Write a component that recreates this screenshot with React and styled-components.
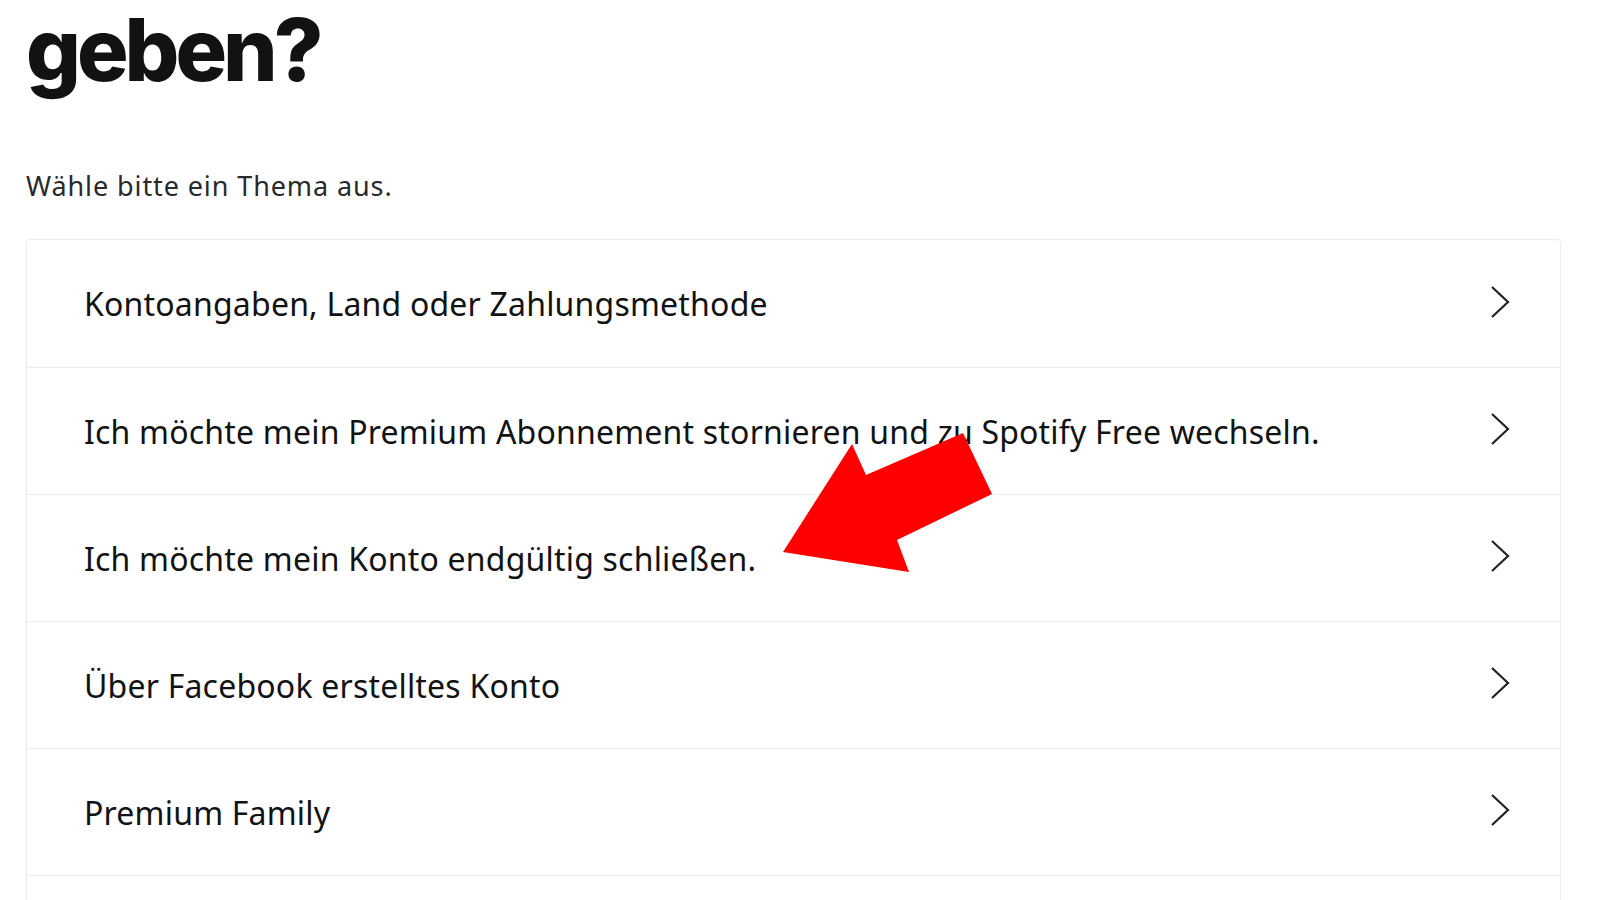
import React from 'react'
import styled, {createGlobalStyle} from 'styled-components'

const GlobalStyle = createGlobalStyle`
  html, body {
    margin: 0;
    padding: 0;
    background: #ffffff;
    overflow: hidden;
  }
  body {
    font-family: "Noto Sans", "Liberation Sans", sans-serif;
    color: #121212;
  }
`

const Page = styled.main`
  position: relative;
  width: 1600px;
  height: 900px;
  padding: 0 39px 0 26px;
  box-sizing: border-box;
  overflow: hidden;
`

const Heading = styled.h1`
  margin: 0;
  padding-top: 6px;
  font-family: Inter, "Noto Sans", sans-serif;
  font-weight: 800;
  font-size: 86px;
  line-height: 88px;
  letter-spacing: -4px;
  color: #121212;
`

const Subtitle = styled.p`
  margin: 76px 0 0;
  font-size: 27px;
  line-height: 32px;
  letter-spacing: 0.9px;
  color: #2a2a2a;
`

const TopicList = styled.ul`
  list-style: none;
  margin: 37px 0 0;
  padding: 0;
  border: 1px solid #ececec;
  border-radius: 4px;
`

const Topic = styled.li`
  display: flex;
  align-items: center;
  justify-content: space-between;
  height: 127px;
  padding: 0 50px 0 57px;
  box-sizing: border-box;
  border-top: ${({first}) => (first ? 'none' : '1px solid #ececec')};
  font-size: 32px;
  letter-spacing: 0.2px;
  color: #121212;
`

const Chevron = styled.svg`
  flex: none;
  width: 20px;
  height: 34px;
  margin-top: -4px;
`

const Arrow = styled.svg`
  position: absolute;
  left: 0;
  top: 0;
  pointer-events: none;
`

const topics = [
  'Kontoangaben, Land oder Zahlungsmethode',
  'Ich möchte mein Premium Abonnement stornieren und zu Spotify Free wechseln.',
  'Ich möchte mein Konto endgültig schließen.',
  'Über Facebook erstelltes Konto',
  'Premium Family',
  'Sonstiges'
]

export default function App() {
  return (
    <Page>
      <GlobalStyle />
      <Heading>geben?</Heading>
      <Subtitle>Wähle bitte ein Thema aus.</Subtitle>
      <TopicList>
        {topics.map((t, i) => (
          <Topic key={t} first={i === 0}>
            <span>{t}</span>
            <Chevron viewBox="0 0 20 34">
              <polyline points="2,2 18,17 2,32" fill="none" stroke="#222" strokeWidth="2.2" />
            </Chevron>
          </Topic>
        ))}
      </TopicList>
      <Arrow width="1600" height="900" viewBox="0 0 1600 900">
        <polygon
          points="963,433 992,494 897,540 909,572 783,552 852,444 866,475"
          fill="#ff0000"
        />
      </Arrow>
    </Page>
  )
}
